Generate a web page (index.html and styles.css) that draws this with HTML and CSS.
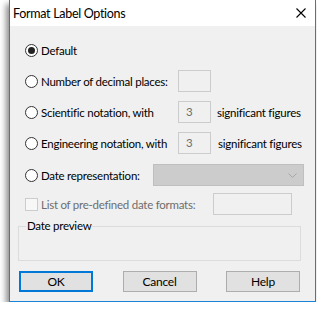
FILE: index.html
```html
<!DOCTYPE html>
<html lang="en">
  <head>
    <meta charset="UTF-8" />
    <title>Format Label Options</title>
    <link rel="stylesheet" href="styles.css">
  </head>
  <body>
    <div class="window">
      <div class="titlebar">
        <span class="title">Format Label Options</span>
        <svg class="close" width="10" height="10" viewBox="0 0 10 10">
          <path d="M0.5 0.5 L9.5 9.5 M9.5 0.5 L0.5 9.5" stroke="#000" stroke-width="1.1" fill="none" />
        </svg>
      </div>

      <div class="content">
        <div class="options">
          <div class="row">
            <label class="choice"><span class="radio checked"></span>Default</label>
          </div>
          <div class="row">
            <label class="choice num"><span class="radio"></span>Number of decimal places:</label>
            <span class="field"></span>
          </div>
          <div class="row">
            <label class="choice num"><span class="radio"></span>Scientific notation, with</label>
            <span class="field">3</span>
            <span class="suffix">significant figures</span>
          </div>
          <div class="row">
            <label class="choice num"><span class="radio"></span>Engineering notation, with</label>
            <span class="field">3</span>
            <span class="suffix eng">significant figures</span>
          </div>
          <div class="row date-row">
            <label class="choice date"><span class="radio"></span>Date representation:</label>
            <span class="combo">
              <svg width="9" height="5" viewBox="0 0 9 5">
                <path d="M0.5 0.5 L4.5 4.5 L8.5 0.5" stroke="#a6a6a6" fill="none" />
              </svg>
            </span>
          </div>
          <div class="row list-row">
            <label class="choice list disabled"><span class="check"></span>List of pre-defined date formats:</label>
            <span class="field wide"></span>
          </div>
        </div>

        <fieldset class="preview">
          <legend>Date preview</legend>
        </fieldset>

        <div class="buttons">
          <button class="btn default">OK</button>
          <button class="btn">Cancel</button>
          <button class="btn">Help</button>
        </div>
      </div>
    </div>
  </body>
</html>
```

FILE: styles.css
```css
body {
  margin: 0;
  background: #fff;
  font-family: "Segoe UI", Lato, sans-serif;
  font-size: 11.5px;
  letter-spacing: -0.25px;
  color: #000;
}

.window {
  margin-left: 9px;
  width: 305px;
  height: 301px;
  background: #f0f0f0;
  border: 1px solid #1883d7;
  border-top: none;
  box-shadow: -3px 4px 6px rgba(0, 0, 0, 0.45);
}

.titlebar {
  height: 26px;
  background: #fff;
  display: flex;
  align-items: center;
  justify-content: space-between;
  padding: 0 9px 0 3px;
}

.title {
  font-size: 12.5px;
  letter-spacing: -0.3px;
}

.close {
  display: block;
}

/* Dialog body */
.content {
  padding: 13px 0 0 15px;
}

.options {
  display: flex;
  flex-direction: column;
  gap: 9px;
}

.row {
  display: flex;
  align-items: center;
  height: 22px;
  white-space: nowrap;
}

.date-row {
  margin-top: 1px;
}

.list-row {
  margin-top: -2px;
}

.choice {
  display: flex;
  align-items: center;
  flex-shrink: 0;
}

.choice.num {
  width: 153px;
}

.choice.date {
  width: 128px;
}

.choice.list {
  width: 188px;
}

.disabled {
  color: #6d6d6d;
}

.radio {
  flex-shrink: 0;
  width: 11px;
  height: 11px;
  border: 1px solid #333;
  border-radius: 50%;
  background: #fff;
  margin-right: 3px;
  display: flex;
  align-items: center;
  justify-content: center;
}

.radio.checked::after {
  content: "";
  width: 7px;
  height: 7px;
  border-radius: 50%;
  background: #222;
}

.check {
  flex-shrink: 0;
  width: 11px;
  height: 11px;
  border: 1px solid #cccccc;
  background: #f7f7f7;
  margin-right: 3px;
}

.field {
  flex-shrink: 0;
  box-sizing: border-box;
  width: 33px;
  height: 22px;
  border: 1px solid #cccccc;
  background: #f0f0f0;
  color: #6d6d6d;
  padding: 3px 0 0 7px;
}

.field.wide {
  width: 79px;
}

.suffix {
  margin-left: 6px;
}

.suffix.eng {
  margin-left: 7px;
}

.combo {
  flex-shrink: 0;
  box-sizing: border-box;
  width: 151px;
  height: 22px;
  border: 1px solid #bfbfbf;
  background: #cccccc;
  display: flex;
  align-items: center;
  justify-content: flex-end;
  padding-right: 6px;
}

.combo svg {
  display: block;
}

/* Date preview group */
.preview {
  box-sizing: border-box;
  margin: 3px 0 0 -7px;
  width: 283px;
  height: 43px;
  border: 1px solid #dcdcdc;
  padding: 0 0 0 7px;
}

.preview legend {
  padding: 0 1px;
  line-height: 16px;
}

/* Buttons */
.buttons {
  display: flex;
  justify-content: space-between;
  width: 281px;
  margin: 10px 0 0 -6px;
}

.btn {
  box-sizing: border-box;
  width: 74px;
  height: 21px;
  font-family: inherit;
  font-size: 12px;
  letter-spacing: inherit;
  color: #000;
  background: #e1e1e1;
  border: 1px solid #adadad;
  padding: 0;
}

.btn.default {
  border: 2px solid #0078d7;
}
```
